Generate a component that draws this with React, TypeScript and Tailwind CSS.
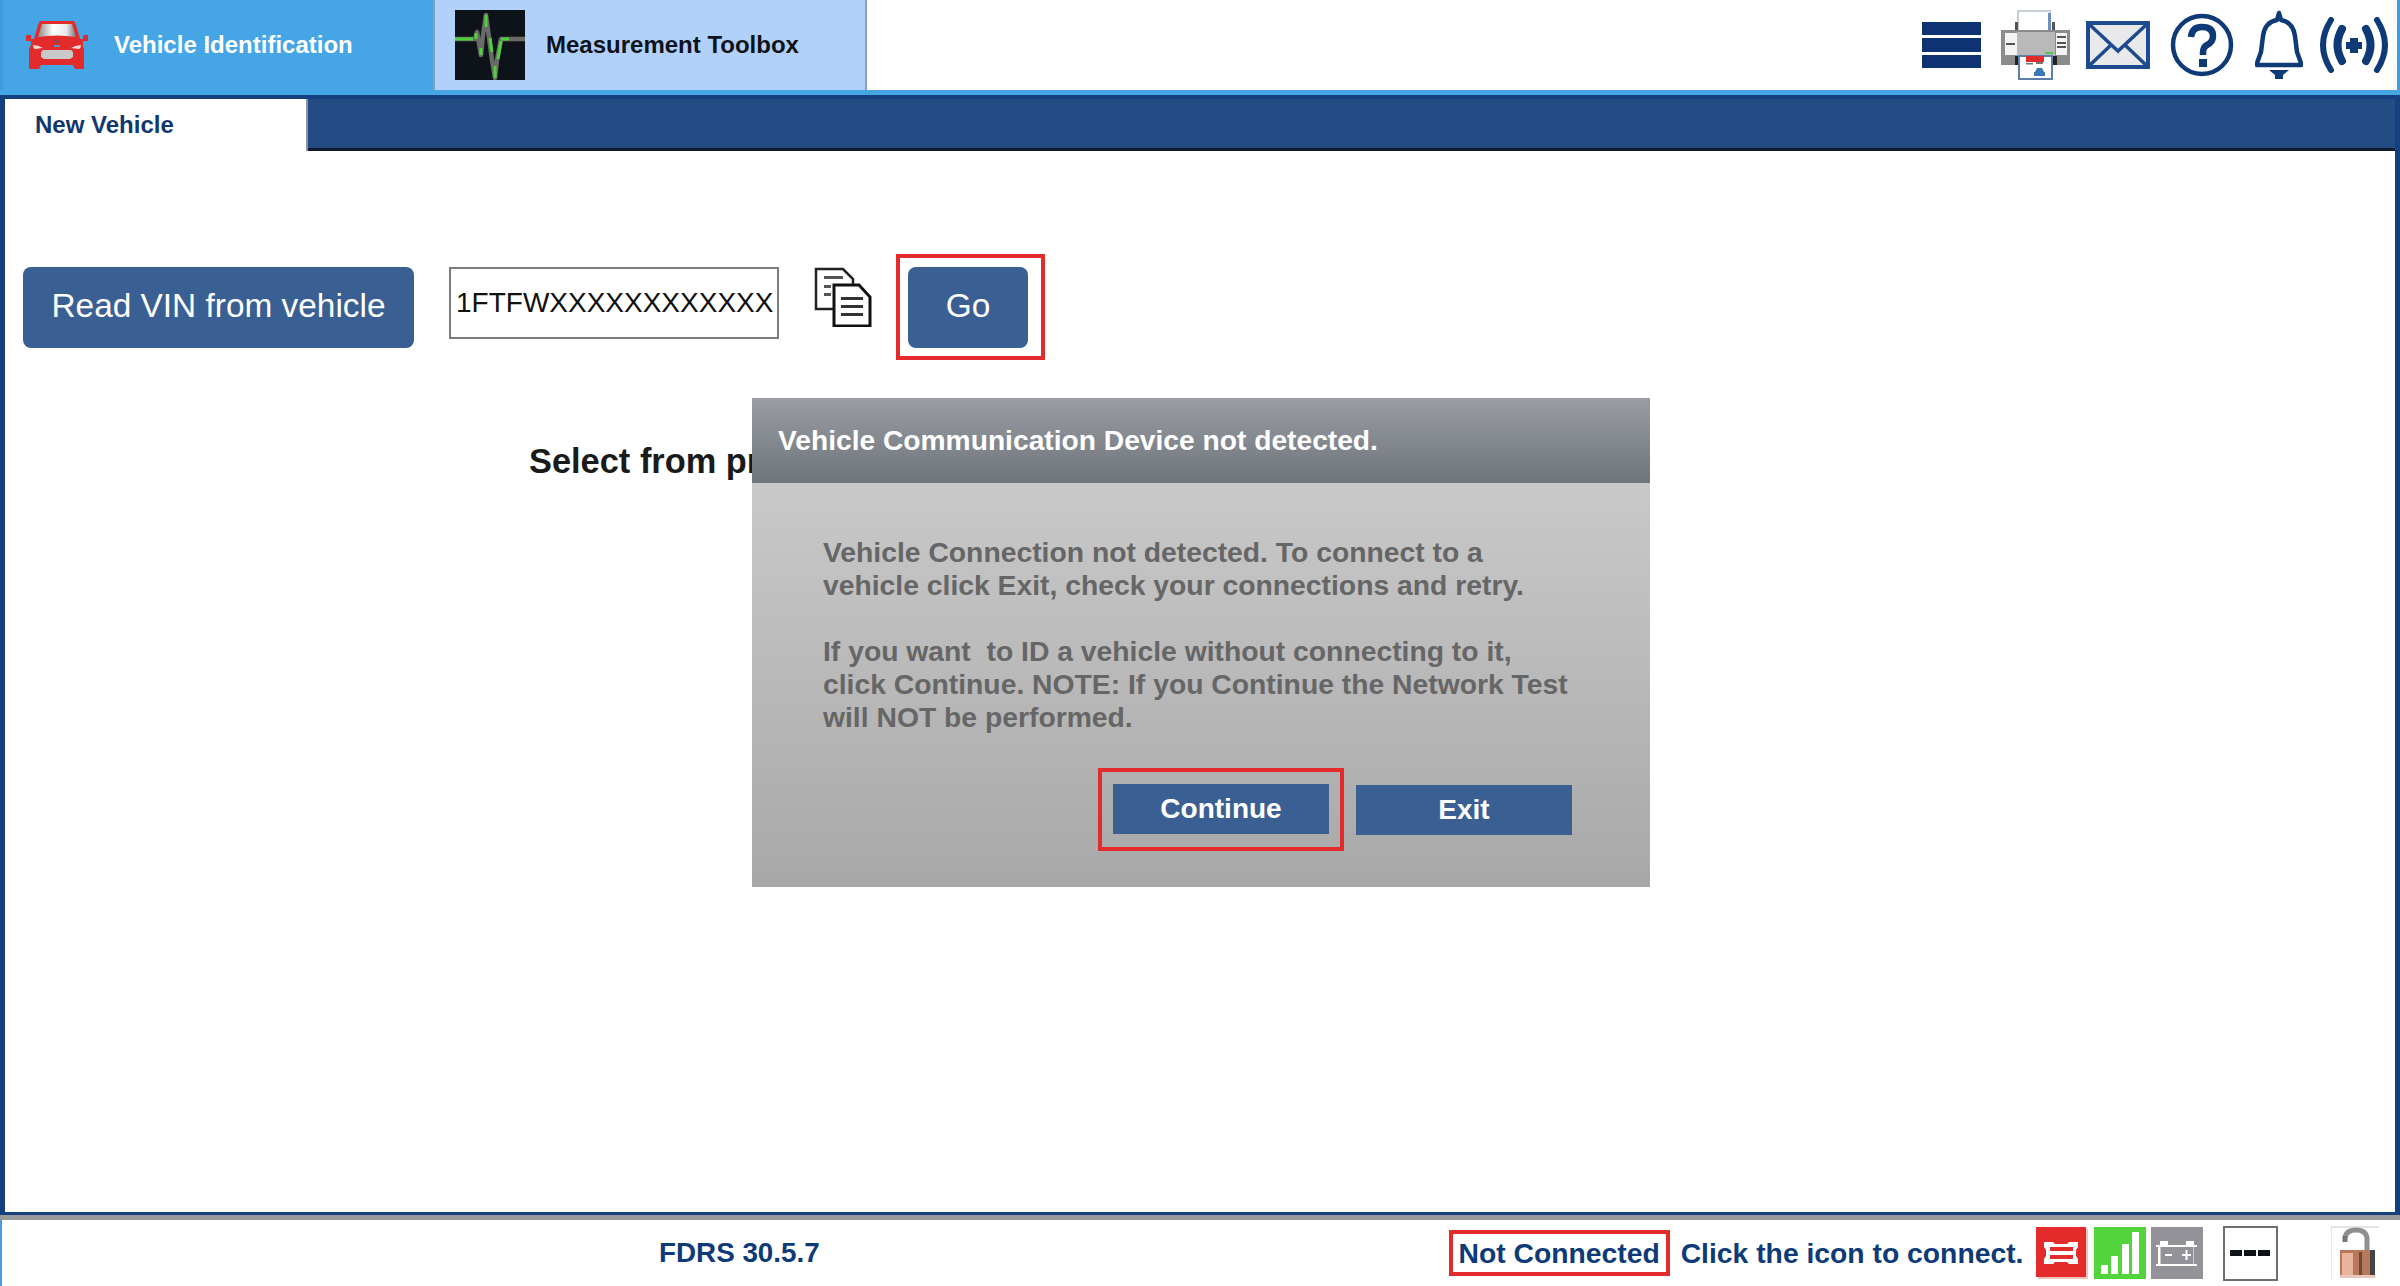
import React from "react";

const font = { fontFamily: '"Liberation Sans", Arial, sans-serif' };

function Car() {
  return (
    <svg width="66" height="50" viewBox="0 0 66 50" className="block">
      <defs>
        <linearGradient id="glass" x1="0" x2="1" y1="0" y2="0">
          <stop offset="0" stopColor="#8a8a8a" />
          <stop offset="0.4" stopColor="#ffffff" />
          <stop offset="0.75" stopColor="#e8e8e8" />
          <stop offset="1" stopColor="#777" />
        </linearGradient>
      </defs>
      <path d="M2 15h5v4h3l4-14 2-4h34l2 4 4 14h3v-4h5v6h-5v6l1 2v20h-9l-2-4H17l-2 4H5V29l2-4v-4H2z" fill="#e32b2b" />
      <path d="M14 17l4-13h30l4 13q-19-3-38 0z" fill="url(#glass)" />
      <path d="M9 25q5 0 10 3l-8 1q-2-1-2-4zM57 25q-5 0-10 3l8 1q2-1 2-4z" fill="#f1dada" />
      <path d="M19 30h28l2 2v5l-3 2H20l-3-2v-5z" fill="#c9c9c9" />
      <path d="M30 20h6l-3 4z" fill="#8c4a55" />
      <path d="M30 25h6v2h-6z" fill="#5e8fc9" />
    </svg>
  );
}

function Pulse() {
  return (
    <svg width="70" height="70" viewBox="0 0 70 70" className="block">
      <rect width="70" height="70" fill="#0e131a" />
      <path d="M0 29H20L22 22L26 45L28 25L31 5L33 20L37 50L40 68L42 50L46 29H70" fill="none" stroke="#6a6a66" strokeWidth="4.500" strokeLinejoin="round" />
      <path d="M0 29H18M21 23v6M26 38v7M31 5v12M35 28l2 14M40 56v12M43 49l3-18M46 29h8" fill="none" stroke="#4fd13a" strokeWidth="3" />
    </svg>
  );
}

function Printer() {
  return (
    <svg width="70" height="70" viewBox="0 0 70 70" className="block">
      <path d="M18 1h32v24H18z" fill="#fff" stroke="#c8cfd8" strokeWidth="2" />
      <path d="M48 3h3v22h-3z" fill="#6f8fbd" />
      <path d="M15 12h3v14h-3zM52 12h3v14h-3z" fill="#555" />
      <rect x="1" y="20" width="69" height="35" fill="#8c8c8c" />
      <rect x="5" y="23" width="12" height="22" fill="#f4f4f4" />
      <rect x="56" y="23" width="11" height="22" fill="#f4f4f4" />
      <rect x="17" y="22" width="38" height="24" fill="#b9b9b9" />
      <path d="M6 33h9v2H6zM57 26h9v2h-9zM57 32h9v2h-9zM57 36h9v2h-9z" fill="#555" />
      <path d="M45 42h8v2h-8z" fill="#55c24a" />
      <path d="M15 46h4v9h-4zM53 46h4v9h-4z" fill="#222" />
      <rect x="19" y="46" width="33" height="23" fill="#fff" stroke="#5d7ea8" strokeWidth="2" />
      <path d="M26 46h18v6H26z" fill="#e32b2b" />
      <path d="M26 53h7v1.500h-7zM36 52h7v2h-7z" fill="#777" />
      <path d="M35 62l2-4h5l2 4h1v4H34v-4z" fill="#3d78b8" />
    </svg>
  );
}

function Envelope() {
  return (
    <svg width="64" height="48" viewBox="0 0 64 48" className="block">
      <rect x="2" y="2" width="60" height="44" fill="#e9e9ec" stroke="#1e4b8f" strokeWidth="4" />
      <path d="M3 45l22-21M61 45L39 24M4 4l28 26L60 4" fill="none" stroke="#1e4b8f" strokeWidth="3.500" />
    </svg>
  );
}

function Help() {
  return (
    <svg width="64" height="64" viewBox="0 0 64 64" className="block">
      <circle cx="32" cy="32" r="29" fill="none" stroke="#0e3a78" strokeWidth="4.500" />
      <path d="M21 24q1-10 11-10 11 0 11 9 0 6-6 9-4 2-4 8v2" fill="none" stroke="#0e3a78" strokeWidth="6.500" />
      <rect x="29" y="46" width="8" height="8" fill="#0e3a78" />
    </svg>
  );
}

function Bell() {
  return (
    <svg width="48" height="70" viewBox="0 0 48 70" className="block">
      <path d="M24 3l2 7q12 2 14 16l2 16 4 11v2H2v-2l4-11 2-16Q10 12 22 10z" fill="none" stroke="#0e3a78" strokeWidth="4.500" strokeLinejoin="round" />
      <path d="M14 60h20l-6 5v4h-8v-4z" fill="#0e3a78" />
    </svg>
  );
}

function Broadcast() {
  return (
    <svg width="70" height="56" viewBox="0 0 70 56" className="block">
      <g fill="none" stroke="#0e3a78" strokeLinecap="round">
        <path d="M12 3Q-4 28 12 53" strokeWidth="6" />
        <path d="M58 3q16 25 0 50" strokeWidth="6" />
        <path d="M23 12q-9 16 0 32" strokeWidth="8" />
        <path d="M47 12q9 16 0 32" strokeWidth="8" />
      </g>
      <path d="M31 21h8v4h4v7h-4v4h-8v-4h-4v-7h4z" fill="#0e3a78" />
    </svg>
  );
}

function CopyIcon() {
  return (
    <svg width="60" height="60" viewBox="0 0 60 60" className="block">
      <path d="M3 2h27l10 10v30H3z" fill="#fff" stroke="#222" strokeWidth="2.500" />
      <path d="M11 9h19v3H11zM11 18h7v3h-7zM11 26h7v3h-7z" fill="#555" />
      <path d="M21 18h25l11 12v29H21z" fill="#fff" stroke="#111" strokeWidth="3" />
      <path d="M28 30h22v3H28zM28 38h22v3H28zM28 46h22v3H28z" fill="#333" />
    </svg>
  );
}

function BatteryRed() {
  return (
    <svg width="52" height="52" viewBox="0 0 52 52" className="block">
      <rect x="2" y="2" width="50" height="50" fill="#efc4bd" />
      <rect width="50" height="50" fill="#e32b2b" />
      <path d="M8 15h9l2 2h12l2-2h9v5l-2 3v6l2 3v5h-9l-2-2H19l-2 2H8v-5l2-3v-6l-2-3z" fill="#fff" />
      <rect x="14" y="20" width="23" height="4" fill="#e32b2b" />
      <rect x="14" y="28" width="23" height="4" fill="#e32b2b" />
    </svg>
  );
}

function Signal() {
  return (
    <svg width="52" height="52" viewBox="0 0 52 52" className="block">
      <rect width="52" height="52" fill="#53d43c" />
      <rect x="7" y="38" width="7" height="9" fill="#fff" />
      <rect x="17" y="29" width="7" height="18" fill="#fff" />
      <rect x="28" y="17" width="7" height="30" fill="#fff" />
      <rect x="38" y="5" width="7" height="42" fill="#fff" />
    </svg>
  );
}

function BatteryGrey() {
  return (
    <svg width="52" height="52" viewBox="0 0 52 52" className="block">
      <rect width="52" height="52" fill="#929298" />
      <path d="M9 14h8v4h18v-4h8v4h3v2h-3v17h3v2H5v-2h2V20H5v-2h4z" fill="#fff" />
      <rect x="9.500" y="20" width="33" height="17" fill="#929298" />
      <path d="M14 27h7v2h-7zM31 27h9v2h-9zM34.500 23h2v10h-2z" fill="#fff" />
    </svg>
  );
}

function Lock() {
  return (
    <svg width="48" height="54" viewBox="0 0 48 54" className="block">
      <path d="M0 1h48" stroke="#ccc" />
      <path d="M0 1v52" stroke="#ccc" />
      <path d="M14 12q1-8 11-8 10 0 11 8v14" fill="none" stroke="#8f8f8f" strokeWidth="5" />
      <path d="M14 10v6" stroke="#777" strokeWidth="5" />
      <rect x="9" y="24" width="35" height="28" fill="#b9785c" />
      <rect x="11" y="27" width="11" height="22" fill="#e8b49c" />
      <rect x="28" y="26" width="3" height="24" fill="#6d4a38" />
      <rect x="39" y="24" width="5" height="28" fill="#444" />
      <rect x="9" y="49" width="35" height="3" fill="#e8c8bb" />
    </svg>
  );
}

export default function App() {
  return (
    <div className="relative flex h-[1286px] w-[2400px] flex-col overflow-hidden bg-white" style={font}>
      <header className="flex h-[90px] shrink-0 border-l-[3px] border-[#3f9ce0]">
        <div className="flex w-[430px] items-center bg-[#45a5e5]">
          <div className="ml-[21px]">
            <Car />
          </div>
          <span className="ml-[24px] text-[24px] font-bold text-white">Vehicle Identification</span>
        </div>
        <div className="flex w-[434px] items-center border-x-2 border-[#8aa0b8] bg-[#b1d1fb]">
          <div className="ml-[20px]">
            <Pulse />
          </div>
          <span className="ml-[21px] text-[24px] font-bold text-[#0e131a]">Measurement Toolbox</span>
        </div>
        <div className="ml-auto flex items-center border-r-[3px] border-[#3f9ce0] pr-[8px]">
          <div className="flex w-[59px] flex-col gap-[3px]">
            <div className="h-[13px] bg-[#0e3372]" />
            <div className="h-[14px] bg-[#0e3372]" />
            <div className="h-[13px] bg-[#0e3372]" />
          </div>
          <div className="ml-[19px]">
            <Printer />
          </div>
          <div className="ml-[16px]">
            <Envelope />
          </div>
          <div className="ml-[20px]">
            <Help />
          </div>
          <div className="ml-[21px]">
            <Bell />
          </div>
          <div className="ml-[16px]">
            <Broadcast />
          </div>
        </div>
      </header>
      <div className="h-[5px] shrink-0 bg-[#45a5e5]" />

      <main className="flex min-h-0 flex-1 flex-col border-x-[5px] border-t-[4px] border-b-[3px] border-[#14407f] bg-white">
        <div className="flex h-[52px] shrink-0 border-b-[3px] border-[#111a2a] bg-[#244c84]">
          <div className="-mb-[3px] flex h-[52px] w-[303px] items-center border-r-2 border-[#8a94a4] bg-white pl-[30px] text-[24px] font-bold text-[#12366f]">
            New Vehicle
          </div>
        </div>

        <section className="flex items-start pl-[18px] pt-[116px]">
          <button className="h-[81px] w-[391px] rounded-lg bg-[#3a5f92] pb-[2px] text-[33.400px] text-white">Read VIN from vehicle</button>
          <div className="ml-[35px] flex h-[72px] w-[330px] items-center overflow-hidden border-2 border-[#7c7c7c] pl-[5px] text-[28px] whitespace-nowrap text-[#111]">
            <span className="block w-[318px] overflow-hidden">1FTFWXXXXXXXXXXXX</span>
          </div>
          <div className="ml-[34px]">
            <CopyIcon />
          </div>
          <div className="-mt-[13px] ml-[23px] border-[4px] border-[#e32b2b] pt-[9px] pr-[13px] pb-[8px] pl-[8px]">
            <button className="block h-[81px] w-[120px] rounded-lg bg-[#3a5f92] pb-[2px] text-[33.400px] text-white">Go</button>
          </div>
        </section>

        <h2 className="mt-[82px] pl-[524px] text-[34.400px] leading-[38px] font-bold text-[#1a1a1a]">Select from previous sessions</h2>
      </main>

      <div className="h-[5px] shrink-0 bg-[#9a9a9a]" />
      <footer className="relative flex h-[66px] shrink-0 items-center border-l-2 border-[#4a9be6] text-[28.300px] font-bold text-[#0e3a78]">
        <span className="ml-[657px] text-[27.800px]">FDRS 30.5.7</span>
        <div className="ml-[629px] flex h-[46px] w-[221px] items-center justify-center border-[4px] border-[#e32b2b]">Not Connected</div>
        <span className="ml-[11px] w-[355px]">Click the icon to connect.</span>
        <BatteryRed />
        <div className="ml-[6px]">
          <Signal />
        </div>
        <div className="ml-[5px]">
          <BatteryGrey />
        </div>
        <div className="ml-[20px] flex h-[55px] w-[55px] items-center justify-center gap-[2px] border-2 border-[#6f6f6f]">
          <span className="h-[6px] w-[12px] bg-[#0e131a]" />
          <span className="h-[6px] w-[12px] bg-[#0e131a]" />
          <span className="h-[6px] w-[12px] bg-[#0e131a]" />
        </div>
        <div className="ml-[53px]">
          <Lock />
        </div>
      </footer>

      <div className="absolute left-[752px] top-[398px] flex h-[489px] w-[898px] flex-col bg-gradient-to-b from-[#d0d0d0] to-[#a8a8a8]">
        <div className="flex h-[85px] shrink-0 items-center bg-gradient-to-b from-[#9a9da3] to-[#6f757c] pl-[26px] text-[28.200px] font-bold text-white">
          Vehicle Communication Device not detected.
        </div>
        <div className="pl-[71px] pt-[53px] text-[28.300px] leading-[33px] font-bold text-[#666666]">
          <p>
            Vehicle Connection not detected. To connect to a
            <br />
            vehicle click Exit, check your connections and retry.
          </p>
          <p className="mt-[33px] whitespace-pre">
            {"If you want  to ID a vehicle without connecting to it,"}
            <br />
            click Continue. NOTE: If you Continue the Network Test
            <br />
            will NOT be performed.
          </p>
        </div>
        <div className="mt-[34px] flex items-center pl-[346px]">
          <div className="border-[4px] border-[#e32b2b] px-[11px] pt-[12px] pb-[13px]">
            <button className="block h-[50px] w-[216px] bg-[#3a5f92] text-[28px] font-bold text-white">Continue</button>
          </div>
          <button className="ml-[12px] h-[50px] w-[216px] bg-[#3a5f92] text-[28px] font-bold text-white">Exit</button>
        </div>
      </div>
    </div>
  );
}
